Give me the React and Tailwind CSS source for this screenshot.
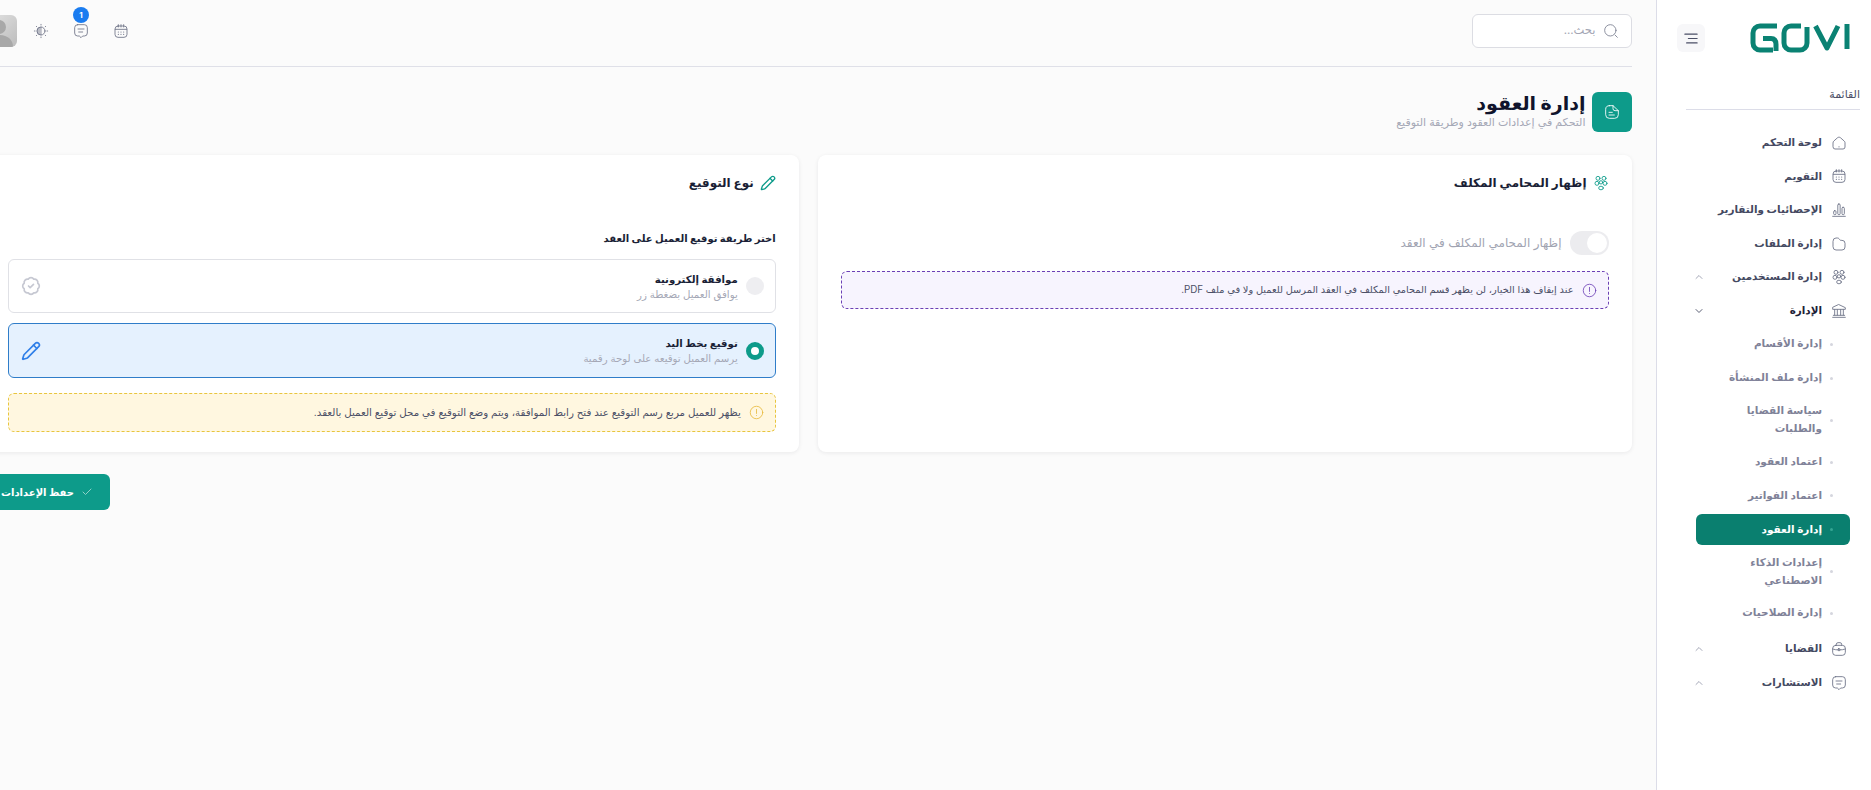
import { Pencil, BadgeCheck, Check, ChevronUp, ChevronDown } from 'lucide-react';

function Svg({ className, children }) {
  return (
    <svg viewBox="0 0 24 24" fill="none" stroke="currentColor" strokeWidth="1.3" strokeLinecap="round" strokeLinejoin="round" className={className}>
      {children}
    </svg>
  );
}

const HomeIcon = (p) => (
  <Svg {...p}>
    <path d="M3 11.5c0-1 .5-1.800 1.200-2.400l5.600-5c1.300-1.100 3.100-1.100 4.400 0l5.600 5c.7.6 1.200 1.400 1.200 2.400V18a3 3 0 0 1-3 3H6a3 3 0 0 1-3-3z" />
    <path d="M12 17.500v.5" />
  </Svg>
);
const CalendarIcon = (p) => (
  <Svg {...p}>
    <rect x="3" y="4.500" width="18" height="17" rx="4.500" />
    <path d="M8 2.500v3.500M12 2.500v3.500M16 2.500v3.500M3.500 9.500h17" />
    <path d="M8 13.500h.01M12 13.500h.01M16 13.500h.01M8 17h.01M12 17h.01M16 17h.01" strokeWidth="1.800" />
  </Svg>
);
const ChartIcon = (p) => (
  <Svg {...p}>
    <path d="M2.500 21.500h19" />
    <rect x="4" y="13" width="3.500" height="6" rx="1.500" />
    <rect x="10.200" y="3" width="3.500" height="16" rx="1.500" />
    <rect x="16.500" y="8" width="3.500" height="11" rx="1.500" />
  </Svg>
);
const FolderIcon = (p) => (
  <Svg {...p}>
    <path d="M3 7.500A4.500 4.500 0 0 1 7.500 3h2.300c1 0 1.700.4 2.300 1.200l1 1.300c.5.7 1 1 2 1h1.400A4.500 4.500 0 0 1 21 11v5.500a4.500 4.500 0 0 1-4.500 4.500h-9A4.500 4.500 0 0 1 3 16.500z" />
  </Svg>
);
const UsersIcon = (p) => (
  <Svg {...p}>
    <circle cx="7.500" cy="5" r="3" />
    <circle cx="16.500" cy="5" r="3" />
    <circle cx="6" cy="12.500" r="3" />
    <circle cx="18" cy="12.500" r="3" />
    <circle cx="12" cy="11" r="2.500" />
    <ellipse cx="12" cy="19.500" rx="3.500" ry="2.700" />
  </Svg>
);
const BankIcon = (p) => (
  <Svg {...p}>
    <path d="M12 2.500l9.500 4.500v2.500h-19V7z" />
    <path d="M5.500 10v8M9.500 10v8M14.500 10v8M18.500 10v8M3.500 18.500h17M2.500 21.500h19" />
  </Svg>
);
const CaseIcon = (p) => (
  <Svg {...p}>
    <rect x="2.500" y="6.500" width="19" height="15" rx="4.500" />
    <path d="M8 6.500V5a2.500 2.500 0 0 1 2.500-2.500h3A2.500 2.500 0 0 1 16 5v1.500M2.500 12c5 2 14 2 19 0" />
    <rect x="10.500" y="11.500" width="3" height="3" rx="1" />
  </Svg>
);
const ChatIcon = (p) => (
  <Svg {...p}>
    <path d="M7 2.500h10A4.500 4.500 0 0 1 21.500 7v8a4.500 4.500 0 0 1-4.500 4.500h-2.500l-2.500 2.500-2.500-2.500H7A4.500 4.500 0 0 1 2.500 15V7A4.500 4.500 0 0 1 7 2.500z" />
    <path d="M7.500 9h9M8.500 13.500h6" />
  </Svg>
);
const SunIcon = (p) => (
  <Svg {...p}>
    <circle cx="12" cy="12" r="6" />
    <path d="M12 6a6 6 0 0 0 0 12z" fill="currentColor" opacity="0.45" />
    <path d="M12 2v1M12 21v1M2 12h1M21 12h1M5 5l.7.7M18.300 18.300l.7.7M19 5l-.7.7M5.700 18.300L5 19" />
  </Svg>
);
const SearchIcon = (p) => (
  <Svg {...p}>
    <circle cx="11" cy="11" r="8.500" />
    <path d="M21.500 21.500l-3.500-3.500" />
  </Svg>
);
const NoteIcon = (p) => (
  <Svg {...p}>
    <path d="M8 2.500h5.500L21.500 10v6a5.500 5.500 0 0 1-5.500 5.500H8A5.500 5.500 0 0 1 2.500 16V8A5.500 5.500 0 0 1 8 2.500z" />
    <path d="M13.500 2.500V7a3 3 0 0 0 3 3h5M7.500 12.500h5M7.500 16.500h8" />
  </Svg>
);
const AlertIcon = (p) => (
  <Svg {...p}>
    <circle cx="12" cy="12" r="10" />
    <path d="M12 7v6.500M12 16.800v.1" />
  </Svg>
);

// logo, drawn with strokes
function Logo() {
  return (
    <svg viewBox="0 0 100 30" className="w-[100px] h-[30px] text-[#0a8273]" fill="none" stroke="currentColor" strokeWidth="5" strokeLinejoin="round">
      <path d="M27 3H10a7 7 0 0 0-7 7v10a7 7 0 0 0 7 7h13" />
      <path d="M13 15.500h8c4 0 5 3 5 6v6.500" />
      <path d="M51 3H41a7 7 0 0 0-7 7v10a7 7 0 0 0 7 7h9a7 7 0 0 0 7-7V4" />
      <path d="M65.500 3L77 25l11-22" />
      <path d="M97 1v25" />
    </svg>
  );
}

const topItems = [
  { label: 'لوحة التحكم', Icon: HomeIcon },
  { label: 'التقويم', Icon: CalendarIcon },
  { label: 'الإحصائيات والتقارير', Icon: ChartIcon },
  { label: 'إدارة الملفات', Icon: FolderIcon },
  { label: 'إدارة المستخدمين', Icon: UsersIcon, arrow: 'up' },
  { label: 'الإدارة', Icon: BankIcon, arrow: 'down', open: true },
];

const subItems = [
  { label: 'إدارة الأقسام' },
  { label: 'إدارة ملف المنشأة' },
  { label: 'سياسة القضايا والطلبات', tall: true },
  { label: 'اعتماد العقود' },
  { label: 'اعتماد الفواتير' },
  { label: 'إدارة العقود', active: true },
  { label: 'إعدادات الذكاء الاصطناعي', tall: true },
  { label: 'إدارة الصلاحيات' },
];

const bottomItems = [
  { label: 'القضايا', Icon: CaseIcon, arrow: 'up' },
  { label: 'الاستشارات', Icon: ChatIcon, arrow: 'up' },
];

function NavItem({ item }) {
  const { label, Icon, arrow, open } = item;
  return (
    <div className="h-[33.6px] flex items-center pr-[3px]">
      <Icon className="w-4 h-4 shrink-0 text-[#6b7085]" />
      <span className={`mr-[9px] text-[10.400px] font-semibold whitespace-nowrap ${open ? 'text-[#1c2037]' : 'text-[#444961]'}`}>{label}</span>
      {arrow === 'up' && <ChevronUp className="w-3 h-3 mr-auto text-[#a5a8b8]" />}
      {arrow === 'down' && <ChevronDown className="w-3 h-3 mr-auto text-[#5c6075]" />}
    </div>
  );
}

function SubItem({ item }) {
  const { label, tall, active } = item;
  return (
    <div className={`flex items-center py-[1.500px] ${tall ? 'h-[50px]' : 'h-[33.8px]'}`}>
      <div className={`w-[154px] h-full flex items-center pr-[17px] rounded-md ${active ? 'bg-[#0a7f6f]' : ''}`}>
        <span className={`w-[3px] h-[3px] rounded-full shrink-0 ${active ? 'bg-[#35a593]' : 'bg-[#d5d6de]'}`} />
        <span className={`mr-[8px] text-[10.500px] font-semibold leading-[18px] ${tall ? 'w-[96px]' : 'whitespace-nowrap'} ${active ? 'text-white' : 'text-[#7f8298]'}`}>{label}</span>
      </div>
    </div>
  );
}

function Sidebar() {
  return (
    <aside className="w-[215px] shrink-0 h-full bg-white border-l border-[#dcdde8]">
      <div className="flex items-center h-[76px] pr-[21px] pl-[20px] justify-between">
        <Logo />
        <button className="w-7 h-7 rounded-md bg-[#f7f7f9] flex items-center justify-center text-[#4b4f66]">
          <svg viewBox="0 0 16 12" className="w-[14px] h-[11px]" fill="none" stroke="currentColor" strokeWidth="1.300" strokeLinecap="round">
            <path d="M1 1h14M5 6h10M3 11h12" />
          </svg>
        </button>
      </div>
      <div className="mr-[11px] w-[174px] h-[34px] border-b border-[#dcdde8] flex items-start pt-[10px]">
        <span className="text-[11px] font-medium text-[#4b4f66] leading-[16px]">القائمة</span>
      </div>
      <nav className="mt-4 pr-[21px] pl-[36px]">
        {topItems.map((item) => <NavItem key={item.label} item={item} />)}
        <div className="mb-[2px]">
          {subItems.map((item) => <SubItem key={item.label} item={item} />)}
        </div>
        {bottomItems.map((item) => <NavItem key={item.label} item={item} />)}
      </nav>
    </aside>
  );
}

function Header() {
  return (
    <header className="h-[67px] border-b border-[#dfe0e8] flex items-center justify-between pb-[4px]">
      <div className="w-[160px] h-[34px] bg-white border border-[#dcdde3] rounded-md flex items-center pr-3">
        <SearchIcon className="w-4 h-4 text-[#7b7f91]" />
        <span className="mr-[7px] text-[11.500px] text-[#a3a6b4]">بحث...</span>
      </div>
      <div className="flex items-center gap-4 text-[#6f7488]">
        <CalendarIcon className="w-4 h-4 mx-1" />
        <div className="relative w-6 flex justify-center">
          <ChatIcon className="w-4 h-4" />
          <span className="absolute -top-[16px] left-[4px] w-4 h-4 rounded-full bg-[#1a7cf0] text-white text-[8px] font-bold flex items-center justify-center">1</span>
        </div>
        <SunIcon className="w-4 h-4 mx-1" />
        <div className="w-8 h-8 -mr-1 rounded-md bg-gradient-to-br from-[#e4e4e4] to-[#bcbcbc] overflow-hidden shrink-0">
          <svg viewBox="0 0 32 32" className="w-full h-full text-[#a8a8a8]" fill="currentColor">
            <circle cx="14" cy="12" r="7" />
            <path d="M0 32c0-8 6-12 14-12s14 4 14 12z" />
          </svg>
        </div>
      </div>
    </header>
  );
}

function Option({ title, sub, selected, icon }) {
  return (
    <div className={`flex items-center pr-[11px] pl-[11px] border rounded-md ${selected ? 'h-[55px] bg-[#e5f1fe] border-[#2f7dc9]' : 'h-[54px] bg-white border-[#e0e1e6]'}`}>
      {selected
        ? <span className="w-[18px] h-[18px] rounded-full border-[5px] border-[#0d9b8a] bg-white shrink-0" />
        : <span className="w-[18px] h-[18px] rounded-full bg-[#eeeef1] shrink-0" />}
      <div className="mr-2">
        <div className="text-[10.200px] font-bold text-[#1a1f36] leading-[16px]">{title}</div>
        <div className="text-[10.200px] text-[#a5a8b6] leading-[15px]">{sub}</div>
      </div>
      <div className="mr-auto ml-[1px]">{icon}</div>
    </div>
  );
}

function Card({ Icon, title, children }) {
  return (
    <section className="h-[297px] bg-white rounded-lg shadow-[0_1px_4px_rgba(20,20,40,0.08)] px-[23px] pt-[18px]">
      <div className="flex items-center h-5 gap-[6px]">
        <Icon className="w-4 h-4 text-[#0d9b8a]" />
        <h3 className="text-[12px] font-bold text-[#1a1f36]">{title}</h3>
      </div>
      {children}
    </section>
  );
}

function Main() {
  return (
    <main className="w-[1696px] shrink-0 pr-[24.500px] pl-[25px] h-full bg-[#fbfbfb]">
      <Header />
      <div className="flex items-center mt-[25px] mb-[23px]">
        <div className="w-10 h-10 rounded-md bg-[#0d9b8a] flex items-center justify-center">
          <NoteIcon className="w-4 h-4 text-white" />
        </div>
        <div className="mr-[6px] -mt-[2px]">
          <h1 className="text-[19px] font-bold text-[#10142c] leading-[23px]">إدارة العقود</h1>
          <p className="text-[11px] text-[#a5a8b6] leading-[15px]">التحكم في إعدادات العقود وطريقة التوقيع</p>
        </div>
      </div>
      <div className="grid grid-cols-2 gap-[19px]">
        <Card Icon={UsersIcon} title="إظهار المحامي المكلف">
          <div className="flex items-center mt-[38px] h-6">
            <span className="w-[39px] h-6 rounded-full bg-[#ececef] flex items-center justify-start px-[2px] shrink-0">
              <span className="w-5 h-5 rounded-full bg-white" />
            </span>
            <span className="mr-2 text-[12px] text-[#a1a4b2]">إظهار المحامي المكلف في العقد</span>
          </div>
          <div className="mt-[16px] h-[38px] bg-[#f7f4fe] border border-dashed border-[#6b3fb5] rounded-md flex items-center pr-[11px]">
            <AlertIcon className="w-[15px] h-[15px] text-[#6b3fb5] shrink-0" />
            <span className="mr-2 text-[9.800px] text-[#4b4f66]">عند إيقاف هذا الخيار، لن يظهر قسم المحامي المكلف في العقد المرسل للعميل ولا في ملف PDF.</span>
          </div>
        </Card>
        <Card Icon={Pencil} title="نوع التوقيع">
          <div className="mt-[35px] text-[10px] font-bold text-[#1a1f36] leading-[20px]">اختر طريقة توقيع العميل على العقد</div>
          <div className="mt-[11px] flex flex-col gap-[10px]">
            <Option title="موافقة إلكترونية" sub="يوافق العميل بضغطة زر" icon={<BadgeCheck className="w-5 h-5 text-[#c6c8d2]" />} />
            <Option selected title="توقيع بخط اليد" sub="يرسم العميل توقيعه على لوحة رقمية" icon={<Pencil className="w-5 h-5 text-[#2f7fe8]" />} />
          </div>
          <div className="mt-[15px] h-[39px] bg-[#fff7e0] border border-dashed border-[#e8c53e] rounded-md flex items-center pr-[11px]">
            <AlertIcon className="w-[15px] h-[15px] text-[#e8b93a] shrink-0" />
            <span className="mr-2 text-[10.250px] text-[#4b4f66]">يظهر للعميل مربع رسم التوقيع عند فتح رابط الموافقة، ويتم وضع التوقيع في محل توقيع العميل بالعقد.</span>
          </div>
        </Card>
      </div>
      <div className="flex justify-end mt-[22px]">
        <button className="w-[125px] h-9 rounded-md bg-[#0d9b8a] text-white flex items-center justify-start pr-[17px] gap-[7px] text-[10px] font-bold whitespace-nowrap">
          <Check className="w-3 h-3 text-[#8fd1c7]" />
          حفظ الإعدادات
        </button>
      </div>
    </main>
  );
}

export default function App() {
  return (
    <div dir="rtl" className="flex h-[790px] w-full overflow-hidden bg-[#fbfbfb] font-['Inter','DejaVu_Sans',sans-serif]">
      <Sidebar />
      <Main />
    </div>
  );
}
